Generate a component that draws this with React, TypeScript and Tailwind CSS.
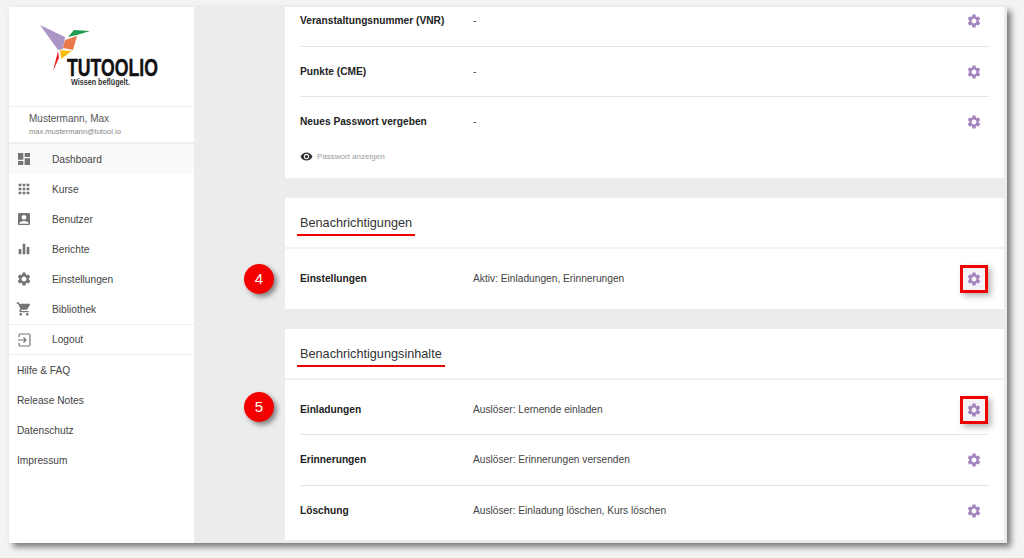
import { ReactNode } from "react";
import {
  MdAccountBox,
  MdApps,
  MdDashboard,
  MdEqualizer,
  MdSettings,
  MdShoppingCart,
  MdVisibility,
} from "react-icons/md";

const font = { fontFamily: '"Liberation Sans", Arial, sans-serif' };

const Logo = () => (
  <svg width="185" height="99" viewBox="0 0 185 99">
    <g transform="translate(-9 -7)">
      <polygon points="40,25 65,37 63,49 58,50" fill="#ab95c7" />
      <polygon points="65,40 77,36 73,50 63,48" fill="#e9784b" />
      <polygon points="68,37 74,30 90,31 77,35" fill="#1e9c50" />
      <polygon points="60,50 72,51 61,59" fill="#fbbf10" />
      <polygon points="58,51 59,58 53,71" fill="#e8202a" />
      <text
        x="67"
        y="76"
        fontSize="24"
        fontWeight="700"
        fill="#111"
        stroke="#111"
        strokeWidth="0.4"
        textLength="91"
        lengthAdjust="spacingAndGlyphs"
        style={{ fontFamily: '"Liberation Sans Narrow", "Liberation Sans", sans-serif' }}
      >
        TUTOOLIO
      </text>
      <text x="71" y="85" fontSize="9" fontWeight="700" fill="#333" textLength="59" lengthAdjust="spacingAndGlyphs">
        Wissen beflügelt.
      </text>
    </g>
  </svg>
);

const LogoutIcon = () => (
  <svg width="16" height="16" viewBox="0 0 16 16" fill="none" stroke="currentColor" strokeWidth="1.2">
    <path d="M3 5V3.2C3 2.5 3.5 2 4.2 2h8.6c.7 0 1.2.5 1.2 1.2v9.6c0 .7-.5 1.2-1.2 1.2H4.2C3.5 14 3 13.500 3 12.800V11" />
    <path d="M2 8h7.500M7.500 5.500 10 8l-2.500 2.500" />
  </svg>
);

const NavItem = ({
  icon,
  label,
  active,
  short,
}: {
  icon: ReactNode;
  label: string;
  active?: boolean;
  short?: boolean;
}) => (
  <div className={`flex items-center pl-[7px] ${short ? "h-[29px]" : "h-[30px]"} ${active ? "bg-[#fafafa]" : ""}`}>
    <span className="flex w-[36px] justify-start text-[#757575]">{icon}</span>
    <span className={`text-[10.2px] text-[#444] ${short ? "" : "pt-[1px]"}`}>{label}</span>
  </div>
);

const LinkItem = ({ label }: { label: string }) => (
  <div className="flex h-[30px] items-center pl-[8px] pt-[1px] text-[10.2px] text-[#444]">{label}</div>
);

const Gear = ({ boxed }: { boxed?: boolean }) =>
  boxed ? (
    <span className="flex h-[28px] w-[28px] items-center justify-center border-[3px] border-[#f00000] bg-[#f4f2f6] shadow-[3px_3px_6px_rgba(0,0,0,0.3)]">
      <MdSettings size={16} className="text-[#a384bd]" />
    </span>
  ) : (
    <span className="flex h-[28px] w-[28px] items-center justify-center">
      <MdSettings size={16} className="text-[#a384bd]" />
    </span>
  );

const Row = ({
  label,
  value,
  boxed,
  badge,
  last,
  rowClass = "h-[50px]",
}: {
  label: string;
  value: string;
  boxed?: boolean;
  badge?: string;
  last?: boolean;
  rowClass?: string;
}) => (
  <div className={`relative flex items-center ${rowClass} ${last ? "" : "border-b border-[#e4e4e4]"}`}>
    {badge && (
      <span className="absolute left-[-56px] top-1/2 flex h-[30px] w-[30px] -translate-y-1/2 items-center justify-center rounded-full bg-[#f40000] text-[15px] text-white shadow-[3px_3px_5px_rgba(0,0,0,0.45)]">
        {badge}
      </span>
    )}
    <span className="w-[173px] text-[10.2px] font-bold text-[#222]">{label}</span>
    <span className="flex-1 text-[10.2px] text-[#444]">{value}</span>
    <span className="mr-[1px]">
      <Gear boxed={boxed} />
    </span>
  </div>
);

const CardHeader = ({ title }: { title: string }) => (
  <div className="h-[51px] border-b-2 border-[#f2f2f2] pl-[12px] pt-[12px]">
    <span className="inline-block border-b-2 border-[#f00000] px-[3px] pb-[3px] text-[12.700px] leading-[15px] text-[#333]">
      {title}
    </span>
  </div>
);

export default function App() {
  return (
    <div className="h-[558px] w-[1024px] overflow-hidden bg-[#f3f3f3] pl-[9px] pt-[7px]" style={font}>
      <div className="flex h-[536px] w-[998px] bg-white shadow-[4px_4px_6px_rgba(0,0,0,0.5)]">
        <aside className="w-[185px] shrink-0 bg-white">
          <div className="h-[100px] border-b border-[#eeeeee]">
            <Logo />
          </div>
          <div className="h-[37px] border-b-2 border-[#eeeeee] pl-[20px] pt-[5px]">
            <div className="text-[10px] leading-[14px] text-[#555]">Mustermann, Max</div>
            <div className="text-[7.500px] leading-[12px] text-[#888]">max.mustermann@tutool.io</div>
          </div>
          <NavItem active icon={<MdDashboard size={16} />} label="Dashboard" />
          <NavItem icon={<MdApps size={16} />} label="Kurse" />
          <NavItem icon={<MdAccountBox size={16} />} label="Benutzer" />
          <NavItem icon={<MdEqualizer size={16} />} label="Berichte" />
          <NavItem icon={<MdSettings size={16} />} label="Einstellungen" />
          <NavItem icon={<MdShoppingCart size={16} />} label="Bibliothek" />
          <div className="border-y border-[#eeeeee]">
            <NavItem short icon={<LogoutIcon />} label="Logout" />
          </div>
          <LinkItem label="Hilfe & FAQ" />
          <LinkItem label="Release Notes" />
          <LinkItem label="Datenschutz" />
          <LinkItem label="Impressum" />
        </aside>

        <main className="flex h-[536px] w-[813px] flex-col gap-[20px] overflow-hidden bg-[#ececec] pl-[91px] pr-[3px]">
          <section className="h-[171px] shrink-0 bg-white px-[15px]">
            <Row label="Veranstaltungsnummer (VNR)" value="-" rowClass="h-[40px] pb-[11px]" />
            <Row label="Punkte (CME)" value="-" />
            <Row label="Neues Passwort vergeben" value="-" last rowClass="h-[49px]" />
            <div className="flex items-center gap-[4px] pt-[4px]">
              <MdVisibility size={13} className="text-[#333]" />
              <span className="text-[8px] text-[#999]">Passwort anzeigen</span>
            </div>
          </section>

          <section className="h-[111px] shrink-0 bg-white">
            <CardHeader title="Benachrichtigungen" />
            <div className="px-[15px]">
              <Row label="Einstellungen" value="Aktiv: Einladungen, Erinnerungen" boxed badge="4" last rowClass="h-[60px] pb-[1px]" />
            </div>
          </section>

          <section className="h-[211px] shrink-0 bg-white">
            <CardHeader title="Benachrichtigungsinhalte" />
            <div className="px-[15px]">
              <Row label="Einladungen" value="Auslöser: Lernende einladen" boxed badge="5" rowClass="h-[55px] pt-[5px]" />
              <Row label="Erinnerungen" value="Auslöser: Erinnerungen versenden" rowClass="h-[51px] pb-[1px]" />
              <Row label="Löschung" value="Auslöser: Einladung löschen, Kurs löschen" last rowClass="h-[53px] pb-[3px]" />
            </div>
          </section>
        </main>
      </div>
    </div>
  );
}
